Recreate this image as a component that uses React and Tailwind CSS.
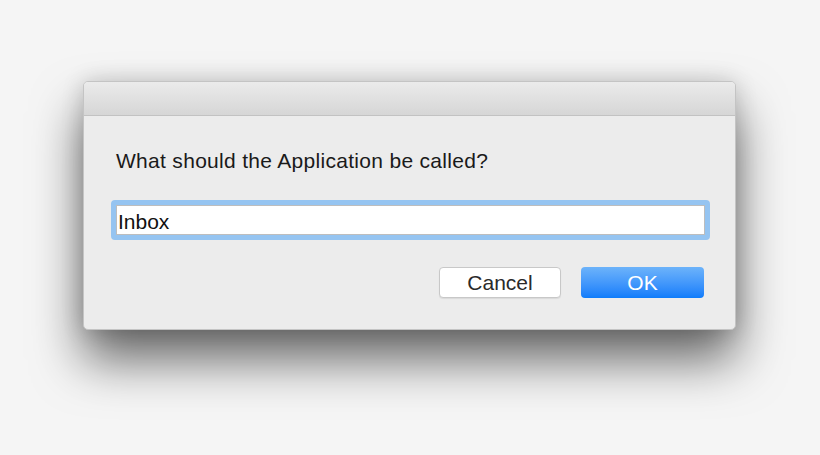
import React from 'react';

const App = () => {
  return (
    <div
      className="w-[820px] h-[455px] overflow-hidden bg-[#f5f5f5] pt-[81px] pl-[83px]"
      style={{ fontFamily: '"Liberation Sans", Arial, sans-serif' }}
    >
      <div className="w-[653px] h-[249px] rounded-[5px] border border-[#c4c4c4] bg-[#ececec] shadow-[0_30px_50px_rgba(0,0,0,0.58),0_0_22px_rgba(0,0,0,0.16)] overflow-hidden flex flex-col">
        <div className="h-[34px] shrink-0 bg-gradient-to-b from-[#ebebeb] to-[#d6d6d6] border-b border-[#c2c2c2]" />
        <div className="flex flex-col pl-[27px] pr-[27px]">
          <p className="mt-[33px] ml-[5px] text-[21px] leading-[24px] tracking-[0.3px] text-[#1a1a1a]">
            What should the Application be called?
          </p>
          <div className="mt-[27px] rounded-[4px] border-[5px] border-[#95c4f1] w-[599px]">
            <div className="h-[30px] bg-white border border-[#bdbdbd] flex items-center pl-[1px] pt-[3px]">
              <span className="text-[21px] leading-[24px] text-[#111]">Inbox</span>
            </div>
          </div>
          <div className="mt-[27px] flex justify-end gap-[20px] pr-[4px]">
            <button className="w-[122px] h-[31px] rounded-[4px] bg-white border border-[#c8c8c8] shadow-[0_1px_1px_rgba(0,0,0,0.08)] text-[21px] leading-[24px] text-[#2a2a2a]">
              Cancel
            </button>
            <button className="w-[123px] h-[31px] rounded-[4px] bg-gradient-to-b from-[#6cb3fa] to-[#0c7cfb] text-[21px] leading-[24px] text-white">
              OK
            </button>
          </div>
        </div>
      </div>
    </div>
  );
};

export default App;
